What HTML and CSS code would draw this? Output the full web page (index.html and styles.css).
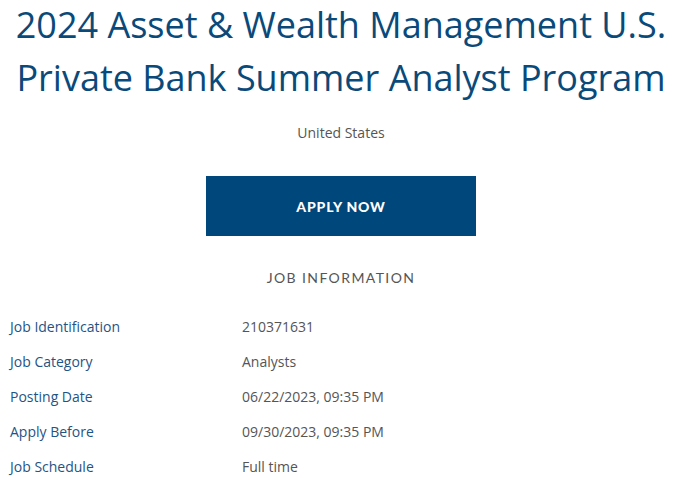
FILE: index.html
```html
<!DOCTYPE html>
<html lang="en">
<head>
  <meta charset="UTF-8" />
  <meta name="viewport" content="width=device-width, initial-scale=1.0" />
  <title>2024 Asset &amp; Wealth Management U.S. Private Bank Summer Analyst Program</title>
  <link rel="stylesheet" href="styles.css">
</head>
<body>
  <div class="job-header">
    <h1 class="job-title">2024 Asset &amp; Wealth Management U.S. Private Bank Summer Analyst Program</h1>
    <div class="job-location">United States</div>
    <a class="apply-button" href="#">APPLY NOW</a>
  </div>

  <div class="job-info">
    <h2 class="section-title">JOB INFORMATION</h2>
    <div class="info-row">
      <div class="info-label">Job Identification</div>
      <div class="info-value">210371631</div>
    </div>
    <div class="info-row">
      <div class="info-label">Job Category</div>
      <div class="info-value">Analysts</div>
    </div>
    <div class="info-row">
      <div class="info-label">Posting Date</div>
      <div class="info-value">06/22/2023, 09:35 PM</div>
    </div>
    <div class="info-row">
      <div class="info-label">Apply Before</div>
      <div class="info-value">09/30/2023, 09:35 PM</div>
    </div>
    <div class="info-row">
      <div class="info-label">Job Schedule</div>
      <div class="info-value">Full time</div>
    </div>
  </div>
</body>
</html>
```
FILE: styles.css
```css
body {
  margin: 0;
  font-family: 'Open Sans', sans-serif;
  background-color: #ffffff;
  color: #555555;
}

.job-header {
  display: flex;
  flex-direction: column;
  align-items: center;
  text-align: center;
}

.job-title {
  margin: -2px 0 0 0;
  font-size: 36px;
  font-weight: 400;
  line-height: 53px;
  color: #0a4a7a;
  padding: 0 10px;
}

.job-location {
  margin-top: 19px;
  font-size: 14px;
  line-height: 20px;
  color: #555555;
}

.apply-button {
  margin-top: 33px;
  width: 270px;
  height: 60px;
  display: flex;
  align-items: center;
  justify-content: center;
  background-color: #00477c;
  color: #ffffff;
  text-decoration: none;
  font-family: 'Lato', sans-serif;
  font-weight: 900;
  font-size: 14px;
  letter-spacing: 0.8px;
}

.job-info {
  padding: 0 10px;
}

.section-title {
  margin: 32px 0 21px 0;
  text-align: center;
  font-family: 'Lato', sans-serif;
  font-weight: 400;
  font-size: 14px;
  line-height: 20px;
  letter-spacing: 1.4px;
  color: #555555;
}

.info-row {
  display: flex;
  height: 35px;
  align-items: center;
  font-size: 14px;
}

.info-label {
  width: 232px;
  color: #1f5484;
}

.info-value {
  color: #555555;
}
```
